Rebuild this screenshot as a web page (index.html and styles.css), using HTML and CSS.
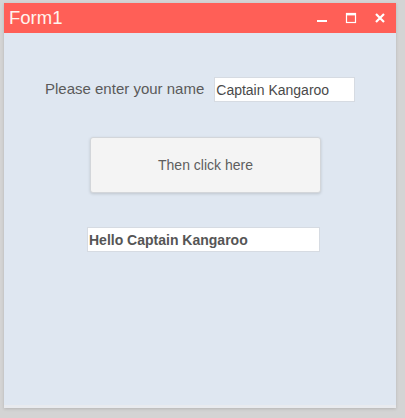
FILE: index.html
```html
<!DOCTYPE html>
<html lang="en">
<head>
  <meta charset="UTF-8">
  <title>Form1</title>
  <link rel="stylesheet" href="styles.css">
</head>
<body>
  <div class="window">
    <div class="titlebar">
      <span class="title">Form1</span>
      <div class="controls">
        <span class="ctl">
          <svg width="12" height="12" viewBox="0 0 12 12"><rect x="1" y="8" width="10" height="2" fill="#fff"/></svg>
        </span>
        <span class="ctl">
          <svg width="12" height="12" viewBox="0 0 12 12"><rect x="1.5" y="1.5" width="9" height="9" fill="none" stroke="#fff" stroke-width="1.2"/><rect x="1" y="1" width="10" height="2.4" fill="#fff"/></svg>
        </span>
        <span class="ctl">
          <svg width="12" height="12" viewBox="0 0 12 12"><path d="M2 2 L10 10 M10 2 L2 10" stroke="#fff" stroke-width="2.2"/></svg>
        </span>
      </div>
    </div>
    <div class="content">
      <div class="name-row">
        <label class="label">Please enter your name</label>
        <input class="name-input" type="text" value="Captain Kangaroo">
      </div>
      <button class="btn">Then click here</button>
      <div class="output">Hello Captain Kangaroo</div>
    </div>
  </div>
</body>
</html>
```

FILE: styles.css
```css
* {
  margin: 0;
  padding: 0;
  box-sizing: border-box;
  font-family: "Liberation Sans", Arial, sans-serif;
}

body {
  background-color: #d4d4d4;
  width: 405px;
  height: 418px;
  overflow: hidden;
}

.window {
  margin: 3px 0 0 4px;
  width: 392px;
  height: 405px;
  background-color: #dfe7f1;
  border-bottom: 3px solid #e8eaee;
  box-shadow: 0 1px 3px rgba(0, 0, 0, 0.15);
  display: flex;
  flex-direction: column;
}

.titlebar {
  height: 30px;
  background-color: #ff5f57;
  display: flex;
  align-items: center;
  justify-content: space-between;
  padding: 0 10px 0 5px;
}

.title {
  color: #fff4ee;
  font-size: 18.5px;
}

.controls {
  display: flex;
  gap: 17px;
}

.ctl {
  display: flex;
  width: 12px;
  height: 12px;
}

.content {
  flex: 1;
  display: flex;
  flex-direction: column;
  align-items: flex-start;
}

.name-row {
  display: flex;
  align-items: center;
  gap: 10px;
  margin: 44px 0 0 41px;
}

.label {
  font-size: 15px;
  color: #5a5a5a;
  margin-top: -3px;
}

.name-input {
  width: 141px;
  height: 25px;
  border: 1px solid #d6dbe2;
  background-color: #fff;
  font-size: 14px;
  color: #4a4a4a;
  padding: 0 1px;
  outline: none;
}

.btn {
  margin: 35px 0 0 86px;
  width: 231px;
  height: 56px;
  background-color: #f4f4f4;
  border: 1px solid #d3d6da;
  border-radius: 3px;
  box-shadow: 0 1px 3px rgba(0, 0, 0, 0.15);
  font-size: 14px;
  color: #5e5e5e;
}

.output {
  margin: 34px 0 0 83px;
  width: 233px;
  height: 25px;
  background-color: #fff;
  border: 1px solid #d6dbe2;
  font-size: 14px;
  font-weight: bold;
  color: #555;
  padding: 4px 1px 0;
}
```
